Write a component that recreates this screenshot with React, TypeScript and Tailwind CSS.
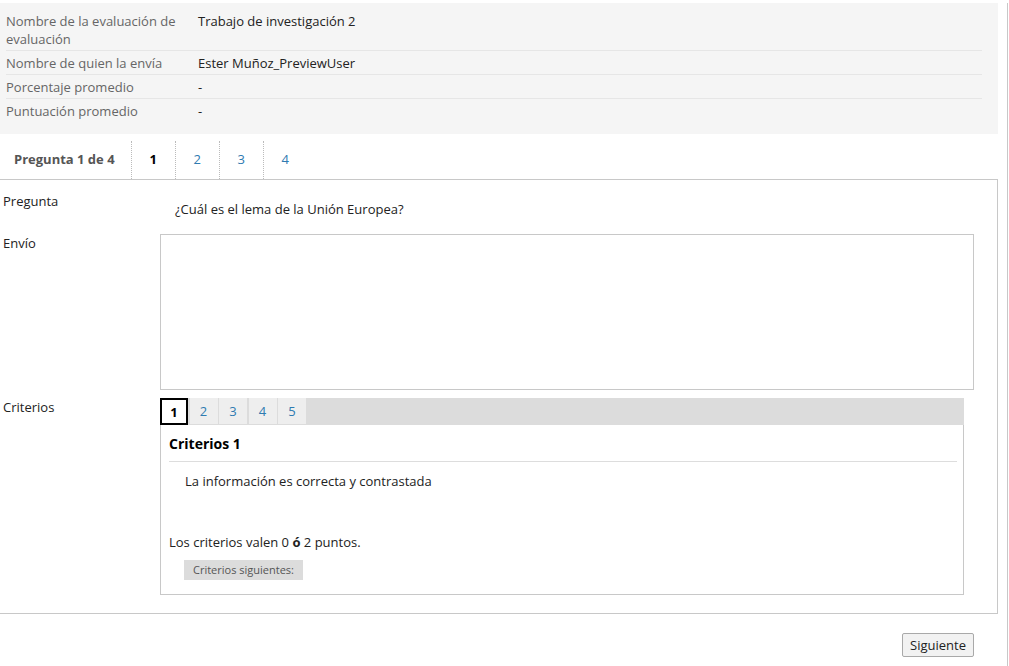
import React from "react";

const info = [
  { label: "Nombre de la evaluación de evaluación", value: "Trabajo de investigación 2" },
  { label: "Nombre de quien la envía", value: "Ester Muñoz_PreviewUser" },
  { label: "Porcentaje promedio", value: "-" },
  { label: "Puntuación promedio", value: "-" },
];

const App: React.FC = () => {
  return (
    <div
      className="w-[1008px] min-h-screen border-r border-[#c8c8c8] bg-white text-[13px] text-[#222]"
      style={{ fontFamily: '"Open Sans", "Noto Sans", sans-serif' }}
    >
      <div className="w-[998px]">
        {/* summary panel */}
        <div className="mt-[3px] bg-[#f5f5f5] pt-[5px] pb-[12px] pl-[6px] pr-[16px]">
          <div className="divide-y divide-[#e6e6e6]">
            {info.map((row, i) => (
              <div key={row.label} className={`flex pb-[2px] leading-[18px] ${i === 0 ? "pt-[4px]" : "pt-[3px]"}`}>
                <div className="w-[192px] pr-[14px] text-[#666]">{row.label}</div>
                <div className="flex-1">{row.value}</div>
              </div>
            ))}
          </div>
        </div>

        {/* question tabs */}
        <div className="mt-[7px] flex h-[38px] items-center">
          <div className="flex h-full items-center pl-[14px] pr-[16px] font-bold text-[#555]">Pregunta 1 de 4</div>
          <div className="flex h-full w-[44px] items-center justify-center border-l border-dotted border-[#bbb] font-bold text-black">1</div>
          <div className="flex h-full w-[44px] items-center justify-center border-l border-dotted border-[#bbb] text-[#2f7bb1]">2</div>
          <div className="flex h-full w-[44px] items-center justify-center border-l border-dotted border-[#bbb] text-[#2f7bb1]">3</div>
          <div className="flex h-full w-[44px] items-center justify-center border-l border-dotted border-[#bbb] text-[#2f7bb1]">4</div>
        </div>

        {/* main box */}
        <div className="border-t border-r border-b border-[#c8c8c8] pb-[18px] leading-[18px]">
          <div className="flex pt-[12px]">
            <div className="w-[160px] pl-[3px]">Pregunta</div>
            <div className="pt-[8px] pl-[15px]">¿Cuál es el lema de la Unión Europea?</div>
          </div>

          <div className="mt-[16px] flex">
            <div className="w-[160px] pl-[3px]">Envío</div>
            <div className="h-[156px] w-[814px] border border-[#c8c8c8] bg-white"></div>
          </div>

          <div className="mt-[8px] flex">
            <div className="w-[160px] pl-[3px]">Criterios</div>
            <div className="w-[804px]">
              <div className="flex h-[27px] gap-[1.5px] bg-[#dcdcdc]">
                <div className="flex h-[27px] w-[28px] items-center justify-center border-2 border-black bg-white font-bold text-black">1</div>
                <div className="flex h-[26px] w-[28px] items-center justify-center bg-[#eeeeee] text-[#2f7bb1]">2</div>
                <div className="flex h-[26px] w-[28px] items-center justify-center bg-[#eeeeee] text-[#2f7bb1]">3</div>
                <div className="flex h-[26px] w-[28px] items-center justify-center bg-[#eeeeee] text-[#2f7bb1]">4</div>
                <div className="flex h-[26px] w-[28px] items-center justify-center bg-[#eeeeee] text-[#2f7bb1]">5</div>
              </div>
              <div className="border-r border-b border-l border-[#c8c8c8] pr-[6px] pb-[14px] pl-[8px]">
                <div className="border-b border-[#dddddd] pt-[9px] pb-[7px] text-[14px] leading-[20px] font-bold text-black">Criterios 1</div>
                <div className="pt-[10px] pl-[16px]">La información es correcta y contrastada</div>
                <div className="mt-[43px]">
                  Los criterios valen 0 <b>ó</b> 2 puntos.
                </div>
                <div className="mt-[9px] ml-[15px] inline-block bg-[#dcdcdc] px-[9px] text-[11px] leading-[20px] text-[#555]">
                  Criterios siguientes:
                </div>
              </div>
            </div>
          </div>
        </div>

        <div className="flex justify-end pt-[19px] pr-[24px]">
          <button className="h-[24px] rounded-[2px] border border-[#a9a9a9] bg-[#f2f2f2] px-[7px] text-[13px] leading-[18px] text-[#222]">
            Siguiente
          </button>
        </div>
      </div>
    </div>
  );
};

export default App;
